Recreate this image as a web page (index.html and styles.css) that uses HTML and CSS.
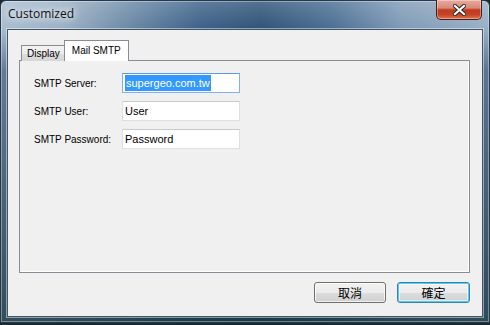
FILE: index.html
```html
<!DOCTYPE html>
<html lang="en">
<head>
  <meta charset="UTF-8" />
  <meta name="viewport" content="width=device-width, initial-scale=1.0"/>
  <title>Customized</title>
  <link rel="stylesheet" href="styles.css">
</head>
<body>
  <div class="window">
    <div class="titlebar">
      <span class="title">Customized</span>
      <div class="close-btn">
        <svg width="13" height="12" viewBox="0 0 13 12">
          <path d="M2 2 L11 10 M11 2 L2 10" stroke="#2a2a2a" stroke-width="4.2" stroke-linecap="square"/>
          <path d="M2 2 L11 10 M11 2 L2 10" stroke="#ffffff" stroke-width="2.2" stroke-linecap="square"/>
        </svg>
      </div>
    </div>

    <div class="client">
      <div class="tabs">
        <div class="tab">Display</div>
        <div class="tab active">Mail SMTP</div>
      </div>

      <div class="tab-page">
        <div class="field-row">
          <span class="field-label">SMTP Server:</span>
          <div class="text-box focused"><span class="selected">supergeo.com.tw</span></div>
        </div>
        <div class="field-row">
          <span class="field-label">SMTP User:</span>
          <div class="text-box">User</div>
        </div>
        <div class="field-row">
          <span class="field-label">SMTP Password:</span>
          <div class="text-box">Password</div>
        </div>
      </div>

      <div class="button-row">
        <div class="btn">取消</div>
        <div class="btn default">確定</div>
      </div>
    </div>
  </div>
</body>
</html>
```

FILE: styles.css
```css
body {
  margin: 0;
  padding: 0;
  background: #1c2a30;
  font-family: "Liberation Sans", Arial, sans-serif;
}

.window {
  width: 490px;
  height: 323px;
  box-sizing: border-box;
  border: 1px solid #26384a;
  border-radius: 6px 6px 0 0;
  padding: 0 6px 5px 6px;
  background:
    linear-gradient(to bottom, rgba(255, 255, 255, 0.18) 0, rgba(255, 255, 255, 0) 28px, rgba(40, 70, 100, 0.55) 70px, rgba(20, 50, 60, 0.8) 100%),
    linear-gradient(to right, #aabdd0 0px, #9db2c6 60px, #6382a1 140px, #3c6188 200px, #2f5377 260px, #4a6e93 330px, #7f9ab6 400px, #9ab0c6 490px);
  box-shadow: inset 0 0 0 1px rgba(255, 255, 255, 0.35);
}

.titlebar {
  height: 28px;
  display: flex;
  justify-content: space-between;
  align-items: flex-start;
}

.title {
  font-family: "Open Sans", sans-serif;
  font-size: 12px;
  line-height: 16px;
  padding: 5px 0 0 1px;
  color: #101010;
  text-shadow: 0 0 6px #fff, 0 0 10px rgba(255, 255, 255, 0.8);
}

.close-btn {
  width: 44px;
  height: 19px;
  margin: -1px 1px 0 0;
  border: 1px solid #4a1e16;
  border-top: none;
  border-radius: 0 0 5px 5px;
  background: linear-gradient(to bottom, #e8ab9c 0%, #d9897a 42%, #c2391d 52%, #c44427 78%, #df7451 100%);
  box-shadow: inset 0 0 0 1px rgba(255, 255, 255, 0.35);
  display: flex;
  align-items: center;
  justify-content: center;
}

.client {
  height: 288px;
  box-sizing: border-box;
  border: 1px solid #44556a;
  background: #f0f0f0;
  box-shadow: 0 0 0 1px rgba(255, 255, 255, 0.45);
  display: flex;
  flex-direction: column;
}

.tabs {
  display: flex;
  align-items: flex-end;
  margin-top: 11px;
  padding-left: 13px;
  height: 20px;
  position: relative;
  z-index: 1;
  margin-bottom: -1px;
}

.tab {
  height: 16px;
  box-sizing: border-box;
  border: 1px solid #898c95;
  border-bottom: none;
  border-right: none;
  padding: 0 4px 0 5px;
  font-size: 10px;
  line-height: 15px;
  color: #000;
  background: linear-gradient(to bottom, #f3f3f3 0%, #ebebeb 50%, #dedede 51%, #d6d6d6 100%);
}

.tab.active {
  height: 21px;
  width: 65px;
  border-right: 1px solid #898c95;
  background: #fff;
  padding: 0 0 0 7px;
  line-height: 19px;
}

.tab-page {
  margin-left: 11px;
  width: 451px;
  height: 213px;
  box-sizing: border-box;
  border: 1px solid #898c95;
  box-shadow: inset -1px -1px 0 #fff;
  background: #f0f0f0;
  padding: 12px 0 0 14px;
  display: flex;
  flex-direction: column;
  gap: 8px;
}

.field-row {
  display: flex;
  align-items: center;
}

.field-label {
  width: 88px;
  font-size: 10px;
  color: #000;
}

.text-box {
  width: 118px;
  height: 20px;
  box-sizing: border-box;
  border: 1px solid #dcdfe4;
  border-top-color: #c7c9ce;
  background: #fff;
  font-size: 11px;
  line-height: 16px;
  padding: 1px 0 0 2px;
  color: #000;
}

.text-box.focused {
  border-color: #7eb4ea;
  border-top-color: #569de5;
}

.selected {
  display: inline-block;
  background: #3399ff;
  color: #fff;
  padding: 0 1px;
}

.button-row {
  display: flex;
  justify-content: flex-end;
  gap: 11px;
  margin-top: 9px;
  padding-right: 12px;
}

.btn {
  width: 72px;
  height: 21px;
  box-sizing: border-box;
  border: 1px solid #707070;
  border-radius: 3px;
  background: linear-gradient(to bottom, #f2f2f2 0%, #ebebeb 50%, #dddddd 51%, #cfcfcf 100%);
  box-shadow: inset 0 0 0 1px rgba(255, 255, 255, 0.7);
  font-family: "Noto Sans CJK TC", sans-serif;
  font-size: 12px;
  line-height: 19px;
  text-align: center;
  color: #000;
}

.btn.default {
  width: 73px;
  border-color: #3c7fb1;
  box-shadow: inset 0 0 0 1px #48d0f8, inset 0 0 0 2px rgba(255, 255, 255, 0.5);
}
```
